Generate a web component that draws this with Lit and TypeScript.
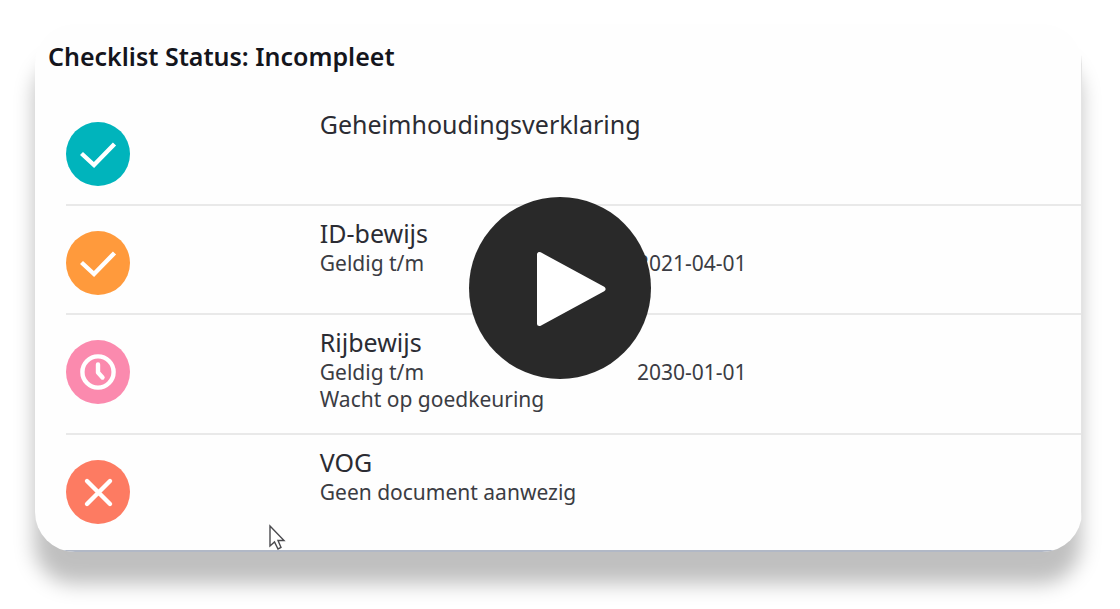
import { LitElement, html, css, svg, nothing } from "lit";
import { customElement, property } from "lit/decorators.js";

type Status = "done" | "expiring" | "pending" | "missing";

interface ChecklistItem {
  title: string;
  status: Status;
  validUntil?: string;
  note?: string;
}

const ITEMS: ChecklistItem[] = [
  { title: "Geheimhoudingsverklaring", status: "done" },
  { title: "ID-bewijs", status: "expiring", validUntil: "2021-04-01" },
  { title: "Rijbewijs", status: "pending", validUntil: "2030-01-01", note: "Wacht op goedkeuring" },
  { title: "VOG", status: "missing", note: "Geen document aanwezig" },
];

const check = svg`<path d="M15.5 31.5 28 43 48.5 22" stroke-width="4.4" stroke-linejoin="miter" />`;
const GLYPHS = {
  done: check,
  expiring: check,
  pending: svg`<circle cx="32" cy="32" r="15.6" stroke-width="4.4" />
    <path d="M32 24.5V32.5L36.5 37.5" stroke-width="4.4" stroke-linecap="round" stroke-linejoin="round" />`,
  missing: svg`<path d="M21 21 44 44M44 21 21 44" stroke-width="4.4" stroke-linecap="round" />`,
};

@customElement("status-icon")
class StatusIcon extends LitElement {
  @property() status: Status = "done";

  static styles = css`
    :host { display: block; width: 64px; height: 64px; }
    .icon { display: block; width: 100%; height: 100%; fill: none; stroke: #fff; }
    .disc { stroke: none; }
    .done { fill: #00b4bc; }
    .expiring { fill: #ff9a3c; }
    .pending { fill: #fb8aae; }
    .missing { fill: #fd7b62; }
  `;

  render() {
    return html`<svg class="icon" viewBox="0 0 64 64" aria-hidden="true">
      <circle class="disc ${this.status}" cx="32" cy="32" r="32" />
      ${GLYPHS[this.status]}
    </svg>`;
  }
}

@customElement("app-root")
class AppRoot extends LitElement {
  static styles = css`
    :host {
      display: block;
      min-height: 100vh;
      box-sizing: border-box;
      padding-top: 24px;
      background: #fff;
      color: #2b2c33;
      font-family: "Noto Sans", "Open Sans", sans-serif;
    }
    .stage { position: relative; padding: 0 38px 0 35px; }
    .card {
      border-radius: 40px;
      background: #fefefe;
      box-shadow: -1px 32px 20px rgba(0, 0, 0, 0.25);
      overflow: hidden;
    }
    .body { border-right: 1px solid #e4e4e4; border-bottom: 2px solid #b1b8c6; }
    .title {
      margin: 0;
      padding: 15px 13px 24px;
      font-size: 25px;
      line-height: 34px;
      font-weight: 600;
      color: #14151c;
    }
    .list { margin: 0; padding: 0 0 0 31px; list-style: none; }
    .row { display: grid; grid-template-columns: 1fr 3fr; border-bottom: 2px solid #e9e9e9; }
    .row:last-child { border-bottom: 0; }
    .mark { padding: 25px 0 18px; }
    .row:last-child .mark { padding-bottom: 26px; }
    .details { padding: 10px 0 20px; }
    .name { margin: 0; font-size: 25px; line-height: 34px; font-weight: 400; }
    .facts { margin: 0; display: grid; grid-template-columns: 5fr 7fr; }
    .label, .value, .note { margin: 0; font-size: 21px; line-height: 27px; color: #3b3c43; }
    .play {
      position: absolute;
      top: 50%;
      left: 50%;
      width: 182px;
      height: 182px;
      transform: translate(-50%, -50%);
      padding: 0;
      border: 0;
      border-radius: 50%;
      background: #292929;
      cursor: pointer;
    }
    .triangle { display: block; width: 100%; height: 100%; fill: #fff; stroke: #fff; }
    .cursor { position: absolute; left: 268px; bottom: 1px; width: 18px; height: 27px; }
  `;

  private renderItem(item: ChecklistItem) {
    return html`<li class="row">
      <div class="mark"><status-icon status=${item.status}></status-icon></div>
      <div class="details">
        <h2 class="name">${item.title}</h2>
        ${item.validUntil
          ? html`<dl class="facts">
              <dt class="label">Geldig t/m</dt>
              <dd class="value">${item.validUntil}</dd>
            </dl>`
          : nothing}
        ${item.note ? html`<p class="note">${item.note}</p>` : nothing}
      </div>
    </li>`;
  }

  render() {
    return html`<main class="stage">
      <section class="card">
        <div class="body">
          <h1 class="title">Checklist Status: Incompleet</h1>
          <ul class="list">${ITEMS.map((item) => this.renderItem(item))}</ul>
        </div>
      </section>
      <svg class="cursor" viewBox="0 0 18 27" aria-hidden="true">
        <path d="M2 2V22L6.5 18 10 25 13 23.5 10 16.5H16Z" fill="#fff" stroke="#4a4a4e" stroke-width="1.4" />
      </svg>
      <button class="play" type="button" aria-label="Video afspelen">
        <svg class="triangle" viewBox="0 0 182 182" aria-hidden="true">
          <path d="M70.5 57.5V126.5L134 92Z" stroke-width="5" stroke-linejoin="round" />
        </svg>
      </button>
    </main>`;
  }
}
